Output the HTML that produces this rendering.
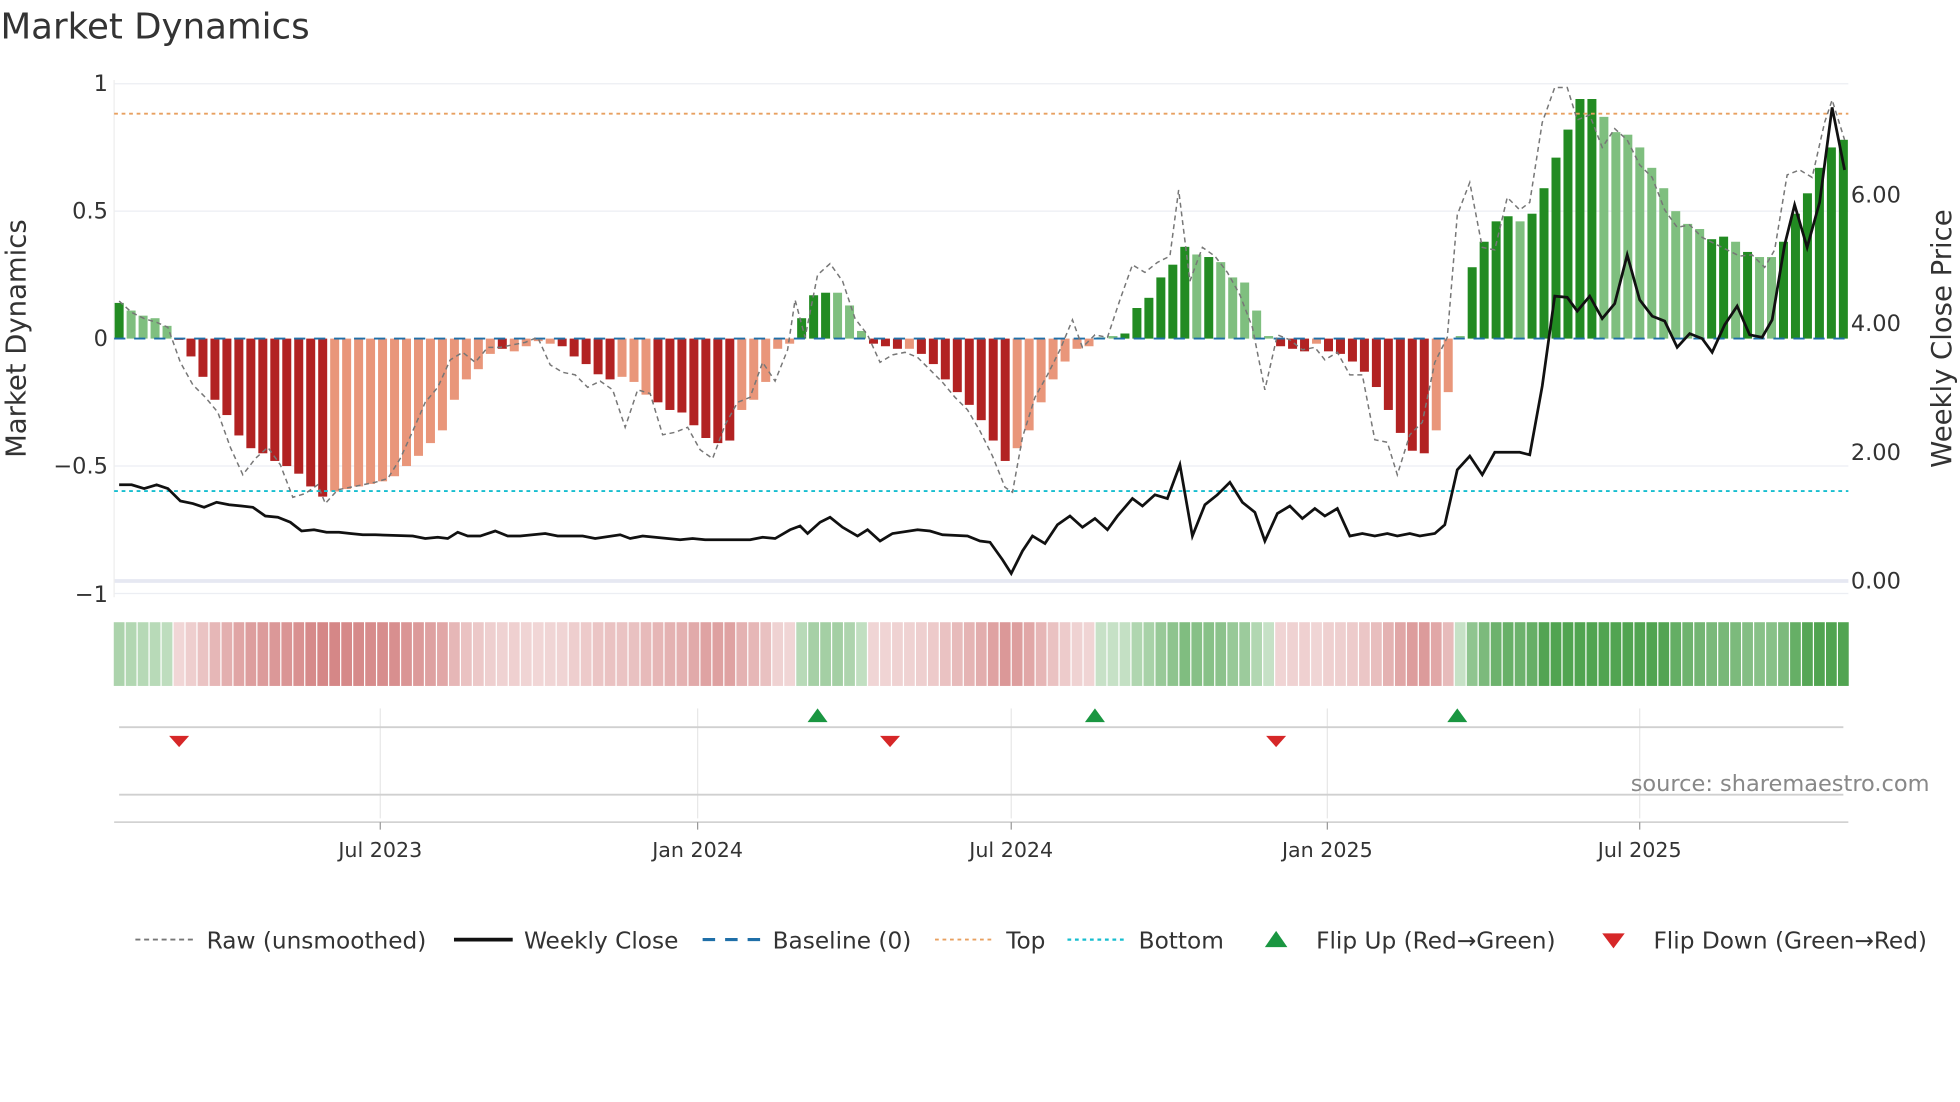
<!DOCTYPE html>
<html><head><meta charset="utf-8"><style>
html,body{margin:0;padding:0;background:#fff;width:1960px;height:1102px;overflow:hidden}
svg{display:block;font-family:"DejaVu Sans","Liberation Sans",sans-serif}
</style></head><body>
<svg id="s" width="1960" height="1102" viewBox="0 0 1568 882" xmlns="http://www.w3.org/2000/svg">
<rect width="1568" height="882" fill="#fff"/>
<text x="0" y="31" font-size="28.5" fill="#333">Market Dynamics</text>
<g stroke="#eceef3" stroke-width="1">
<line x1="91" y1="67" x2="1479" y2="67"/><line x1="91" y1="169" x2="1479" y2="169"/>
<line x1="91" y1="373" x2="1479" y2="373"/><line x1="91" y1="475" x2="1479" y2="475"/>
</g>
<line x1="91" y1="465" x2="1479" y2="465" stroke="#e6e8f2" stroke-width="3"/>
<line x1="91" y1="64" x2="91" y2="478" stroke="#eee"/>
<g font-size="18" fill="#333" text-anchor="end">
<text x="86" y="73">1</text><text x="86" y="175">0.5</text><text x="86" y="277">0</text>
<text x="86" y="379">−0.5</text><text x="86" y="482">−1</text>
</g>
<g font-size="18" fill="#333">
<text x="1481" y="162">6.00</text><text x="1481" y="265">4.00</text><text x="1481" y="368">2.00</text><text x="1481" y="471">0.00</text>
</g>
<text transform="translate(20,271) rotate(-90)" font-size="22" fill="#333" text-anchor="middle">Market Dynamics</text>
<text transform="translate(1561,271) rotate(-90)" font-size="22" fill="#333" text-anchor="middle">Weekly Close Price</text>
<g id="bars"></g>
<line x1="91" y1="91" x2="1479" y2="91" stroke="#e8a060" stroke-width="1.5" stroke-dasharray="3,3"/>
<line x1="91" y1="393" x2="1479" y2="393" stroke="#17becf" stroke-width="1.5" stroke-dasharray="3,3"/>
<line x1="91" y1="271" x2="1479" y2="271" stroke="#1f6fa8" stroke-width="1.5" stroke-dasharray="9,7"/>
<polyline id="raw" fill="none" stroke="#777" stroke-width="1.2" stroke-dasharray="4,3"/>
<polyline id="close" fill="none" stroke="#111" stroke-width="2.2"/>
<g id="heat"></g>
<g stroke="#e8e8e8"><line x1="304" y1="567" x2="304" y2="655"/><line x1="558" y1="567" x2="558" y2="655"/><line x1="809" y1="567" x2="809" y2="655"/><line x1="1062" y1="567" x2="1062" y2="655"/><line x1="1312" y1="567" x2="1312" y2="655"/></g>
<line x1="95" y1="582" x2="1475" y2="582" stroke="#d0d0d0" stroke-width="1.5"/>
<line x1="95" y1="636" x2="1475" y2="636" stroke="#d0d0d0" stroke-width="1.5"/>
<line x1="91" y1="658" x2="1479" y2="658" stroke="#ccc" stroke-width="1.2"/>
<g fill="#1a9641"><path d="M646,578 L654,567 L662,578Z"/><path d="M868,578 L876,567 L884,578Z"/><path d="M1158,578 L1166,567 L1174,578Z"/></g>
<g fill="#d62728"><path d="M135,589 L151,589 L143,598Z"/><path d="M704,589 L720,589 L712,598Z"/><path d="M1013,589 L1029,589 L1021,598Z"/></g>
<text x="1544" y="633" font-size="18" fill="#888" text-anchor="end">source: sharemaestro.com</text>
<g stroke="#999"><line x1="304" y1="658" x2="304" y2="664"/><line x1="558" y1="658" x2="558" y2="664"/><line x1="809" y1="658" x2="809" y2="664"/><line x1="1062" y1="658" x2="1062" y2="664"/><line x1="1312" y1="658" x2="1312" y2="664"/></g>
<g font-size="16.5" fill="#333" text-anchor="middle">
<text x="304" y="686">Jul 2023</text><text x="558" y="686">Jan 2024</text><text x="809" y="686">Jul 2024</text><text x="1062" y="686">Jan 2025</text><text x="1312" y="686">Jul 2025</text>
</g>
<g font-size="18.6" fill="#333">
<line x1="108" y1="752" x2="154" y2="752" stroke="#777" stroke-width="1.5" stroke-dasharray="4,3"/><text x="165" y="759">Raw (unsmoothed)</text>
<line x1="363" y1="752" x2="410" y2="752" stroke="#111" stroke-width="3"/><text x="419" y="759">Weekly Close</text>
<line x1="562" y1="752" x2="608" y2="752" stroke="#1f6fa8" stroke-width="2.5" stroke-dasharray="10,8"/><text x="618" y="759">Baseline (0)</text>
<line x1="748" y1="752" x2="794" y2="752" stroke="#e8a060" stroke-width="1.5" stroke-dasharray="3,3"/><text x="805" y="759">Top</text>
<line x1="854" y1="752" x2="900" y2="752" stroke="#17becf" stroke-width="1.8" stroke-dasharray="3,3"/><text x="911" y="759">Bottom</text>
<path d="M1012,758 L1021,745 L1030,758Z" fill="#1a9641"/><text x="1053" y="759">Flip Up (Red→Green)</text>
<path d="M1282,747 L1300,747 L1291,759Z" fill="#d62728"/><text x="1323" y="759">Flip Down (Green→Red)</text>
</g>
</svg>
<script>
var V=[[.14,1],[.11,0],[.09,0],[.08,0],[.05,0],[-.005,1],[-.07,1],[-.15,1],[-.24,1],[-.30,1],[-.38,1],[-.43,1],[-.45,1],[-.48,1],[-.50,1],[-.53,1],[-.58,1],[-.62,1],[-.60,0],[-.59,0],[-.58,0],[-.57,0],[-.56,0],[-.54,0],[-.50,0],[-.46,0],[-.41,0],[-.36,0],[-.24,0],[-.16,0],[-.12,0],[-.06,0],[-.04,1],[-.05,0],[-.03,0],[-.01,0],[-.02,0],[-.03,1],[-.07,1],[-.10,1],[-.14,1],[-.16,1],[-.15,0],[-.17,0],[-.22,0],[-.25,1],[-.28,1],[-.29,1],[-.34,1],[-.39,1],[-.41,1],[-.40,1],[-.28,0],[-.24,0],[-.17,0],[-.04,0],[-.02,0],[.08,1],[.17,1],[.18,1],[.18,0],[.13,0],[.03,0],[-.02,1],[-.03,1],[-.04,1],[-.04,0],[-.06,1],[-.10,1],[-.16,1],[-.21,1],[-.26,1],[-.32,1],[-.40,1],[-.48,1],[-.43,0],[-.36,0],[-.25,0],[-.16,0],[-.09,0],[-.04,0],[-.03,0],[.005,0],[.01,0],[.02,1],[.12,1],[.16,1],[.24,1],[.29,1],[.36,1],[.33,0],[.32,1],[.30,0],[.24,0],[.22,0],[.11,0],[.01,0],[-.03,1],[-.04,1],[-.05,1],[-.02,0],[-.05,1],[-.06,1],[-.09,1],[-.13,1],[-.19,1],[-.28,1],[-.37,1],[-.44,1],[-.45,1],[-.36,0],[-.21,0],[.01,0],[.28,1],[.38,1],[.46,1],[.48,1],[.46,0],[.49,1],[.59,1],[.71,1],[.82,1],[.94,1],[.94,1],[.87,0],[.81,0],[.80,0],[.75,0],[.67,0],[.59,0],[.50,0],[.45,0],[.43,0],[.39,1],[.40,1],[.38,0],[.34,1],[.32,0],[.32,0],[.38,1],[.49,1],[.57,1],[.67,1],[.75,1],[.78,1]];
var n=V.length,st=1380/(n-1),b='',h='';
V.forEach(function(p,i){var x=95+i*st,v=p[0],y=271-v*204,g=v>=0;
var c=g?(p[1]?'#228b22':'#7fbf7f'):(p[1]?'#b22222':'#e9967a');
var top=Math.min(y,271),ht=Math.max(Math.abs(v*204),.5);
b+='<rect x="'+(x-3.6)+'" y="'+top+'" width="7.2" height="'+ht+'" fill="'+c+'"/>';
var a=g?(.25+Math.min(Math.abs(v),.6)*0.9):(.18+Math.min(Math.abs(v),.6)*0.6);
h+='<rect x="'+(x-4.3)+'" y="498" width="8.6" height="51" fill="'+(g?'#228b22':'#b22222')+'" opacity="'+a+'"/>';});
document.getElementById('bars').innerHTML=b;document.getElementById('heat').innerHTML=h;
document.getElementById('close').setAttribute('points',"95,388 105,388 115,391 125,388 134,391 144,401 154,403 163,406 173,402 183,404 193,405 202,406 212,413 222,414 232,418 241,425 251,424 261,426 271,426 280,427 290,428 300,428 330,429 340,431 350,430 358,431 366,426 374,429 384,429 396,425 406,429 416,429 436,427 446,429 466,429 476,431 496,428 504,431 514,429 534,431 544,432 554,431 564,432 600,432 610,430 620,431 632,424 640,421 646,427 656,418 664,414 674,422 686,429 694,424 704,433 714,427 734,424 744,425 754,428 774,429 784,433 792,434 802,448 809,459 818,441 826,429 836,435 846,420 856,413 866,422 876,415 886,424 894,413 906,399 914,405 924,396 934,399 944,372 954,429 964,404 974,396 984,386 994,402 1004,410 1012,433 1022,411 1032,405 1042,415 1052,407 1060,413 1070,407 1080,429 1090,427 1100,429 1110,427 1118,429 1128,427 1136,429 1148,427 1156,420 1166,376 1176,365 1186,380 1196,362 1206,362 1216,362 1224,364 1234,309 1244,237 1254,238 1262,249 1272,237 1282,255 1292,243 1302,204 1312,240 1322,253 1332,257 1342,278 1352,267 1362,271 1370,282 1380,260 1390,245 1400,268 1410,270 1418,256 1428,196 1436,164 1446,198 1456,162 1466,86 1476,136");
document.getElementById('raw').setAttribute('points',"95,241 105,250 115,255 125,258 134,262 144,290 154,308 164,318 174,330 184,358 194,380 204,367 214,358 224,372 234,398 244,395 254,388 260,403 270,392 280,390 290,388 300,386 310,383 320,367 330,345 340,322 350,310 360,288 370,282 380,290 390,278 400,278 410,276 420,274 430,270 440,292 450,298 460,300 470,310 480,305 490,312 500,342 510,312 520,315 530,348 540,346 550,342 560,360 570,367 580,340 590,322 600,318 610,290 620,305 630,280 636,240 644,270 654,220 664,211 674,225 684,255 694,268 704,290 714,284 724,282 734,286 744,296 754,306 764,318 774,328 784,345 794,365 804,390 810,394 818,350 828,318 838,300 848,280 858,256 866,278 876,268 886,270 896,240 906,212 916,218 926,210 936,205 943,152 952,225 962,198 972,205 982,218 992,236 1002,262 1012,312 1022,268 1032,272 1042,280 1052,278 1060,288 1070,282 1080,300 1090,300 1100,352 1110,354 1118,380 1128,348 1138,338 1148,290 1158,270 1166,172 1176,146 1186,198 1196,200 1206,158 1216,168 1224,162 1234,98 1244,70 1254,70 1262,96 1272,92 1282,118 1292,103 1302,112 1312,132 1322,142 1332,168 1342,182 1352,180 1362,190 1372,195 1382,200 1392,205 1402,204 1412,214 1420,200 1430,140 1440,136 1450,142 1460,98 1466,80 1476,112");
</script>
</body></html>
